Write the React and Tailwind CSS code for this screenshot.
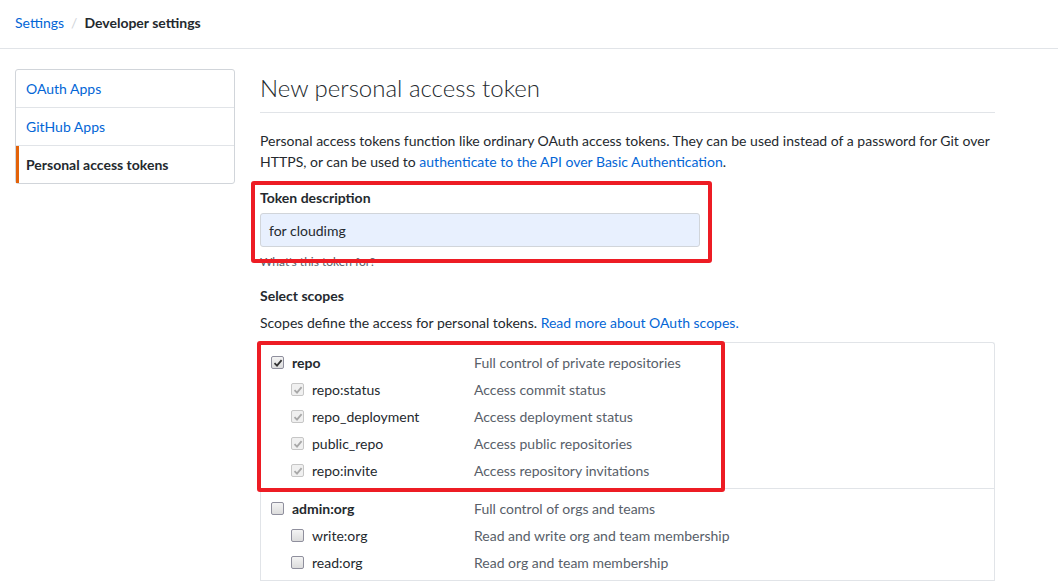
import React from 'react';

const font = { fontFamily: 'Lato, "Noto Sans", sans-serif' };

const Box = ({ checked, disabled }) => (
  <span
    className={`relative inline-flex h-[13px] w-[13px] shrink-0 items-center justify-center rounded-[2px] border ${
      disabled ? 'border-[#c6c6c6] bg-[#f0f0f0]' : 'border-[#8f8f9d] bg-gradient-to-b from-[#f4f4f4] to-[#dcdcdc]'
    }`}
  >
    {checked && (
      <svg width="10" height="10" viewBox="0 0 10 10">
        <path
          d="M1.5 5.2 L4 7.6 L8.6 2.2"
          fill="none"
          stroke={disabled ? '#a8a8a8' : '#333'}
          strokeWidth="1.8"
        />
      </svg>
    )}
  </span>
);

const Row = ({ name, desc, checked, child }) => (
  <div className="flex h-[27px] items-center">
    <div className={`flex w-[213px] items-center ${child ? 'pl-[30px]' : 'pl-[10px]'}`}>
      <Box checked={checked} disabled={child && checked} />
      <span className={`ml-[8px] ${child ? 'text-[#24292e]' : 'font-bold text-[#24292e]'}`}>{name}</span>
    </div>
    <span className="text-[#586069]">{desc}</span>
  </div>
);

const groups = [
  [
    ['repo', 'Full control of private repositories', true, false],
    ['repo:status', 'Access commit status', true, true],
    ['repo_deployment', 'Access deployment status', true, true],
    ['public_repo', 'Access public repositories', true, true],
    ['repo:invite', 'Access repository invitations', true, true],
  ],
  [
    ['admin:org', 'Full control of orgs and teams', false, false],
    ['write:org', 'Read and write org and team membership', false, true],
    ['read:org', 'Read org and team membership', false, true],
  ],
];

export default function App() {
  return (
    <div className="relative h-[584px] overflow-hidden bg-white text-[14px] leading-[21px] text-[#24292e]" style={font}>
      <div className="flex h-[49px] items-center border-b border-[#e1e4e8] px-[15px] pb-[4px]">
        <a className="text-[#0366d6]">Settings</a>
        <span className="mx-[7px] text-[#d1d5da]">/</span>
        <span className="font-bold">Developer settings</span>
      </div>

      <div className="flex gap-[25px] pl-[15px] pt-[20px]">
        <nav className="w-[220px] shrink-0 self-start rounded-[3px] border border-[#d1d5da]">
          <div className="flex h-[38px] items-center border-b border-[#e1e4e8] px-[10px] text-[#0366d6]">OAuth Apps</div>
          <div className="flex h-[38px] items-center border-b border-[#e1e4e8] px-[10px] text-[#0366d6]">GitHub Apps</div>
          <div className="flex h-[37px] items-center border-l-[3px] border-[#e36209] px-[7px] font-bold">Personal access tokens</div>
        </nav>

        <main className="w-[735px] shrink-0">
          <h1 className="mt-[4px] border-b border-[#e1e4e8] pb-[9px] text-[24px] font-light leading-[30px]">
            New personal access token
          </h1>
          <p className="mt-[17px] whitespace-nowrap">
            Personal access tokens function like ordinary OAuth access tokens. They can be used instead of a password for Git over
            <br />
            HTTPS, or can be used to <a className="text-[#0366d6]">authenticate to the API over Basic Authentication</a>.
          </p>

          <div className="mt-[15px] font-bold">Token description</div>
          <div className="mt-[5px] flex h-[34px] w-[440px] items-center rounded-[3px] border border-[#d1d5da] bg-[#e8f0fe] px-[8px]">
            for cloudimg
          </div>
          <div className="mt-[6px] text-[12px] leading-[18px] text-[#586069]">What's this token for?</div>

          <div className="mt-[14px] font-bold">Select scopes</div>
          <div className="mt-[6px]">
            Scopes define the access for personal tokens. <a className="text-[#0366d6]">Read more about OAuth scopes.</a>
          </div>

          <div className="mt-[9px] rounded-t-[3px] border border-b-0 border-[#e1e4e8]">
            {groups.map((g, i) => (
              <div key={i} className="border-b border-[#e1e4e8] pb-[4px] pt-[6px]">
                {g.map(([name, desc, checked, child]) => (
                  <Row key={name} name={name} desc={desc} checked={checked} child={child} />
                ))}
              </div>
            ))}
          </div>
        </main>
      </div>

      <div className="pointer-events-none absolute left-[251px] top-[181px] h-[82px] w-[461px] rounded-[3px] border-[4px] border-[#ed1c24]" />
      <div className="pointer-events-none absolute left-[257px] top-[341px] h-[151px] w-[468px] rounded-[3px] border-[4px] border-[#ed1c24]" />
    </div>
  );
}
